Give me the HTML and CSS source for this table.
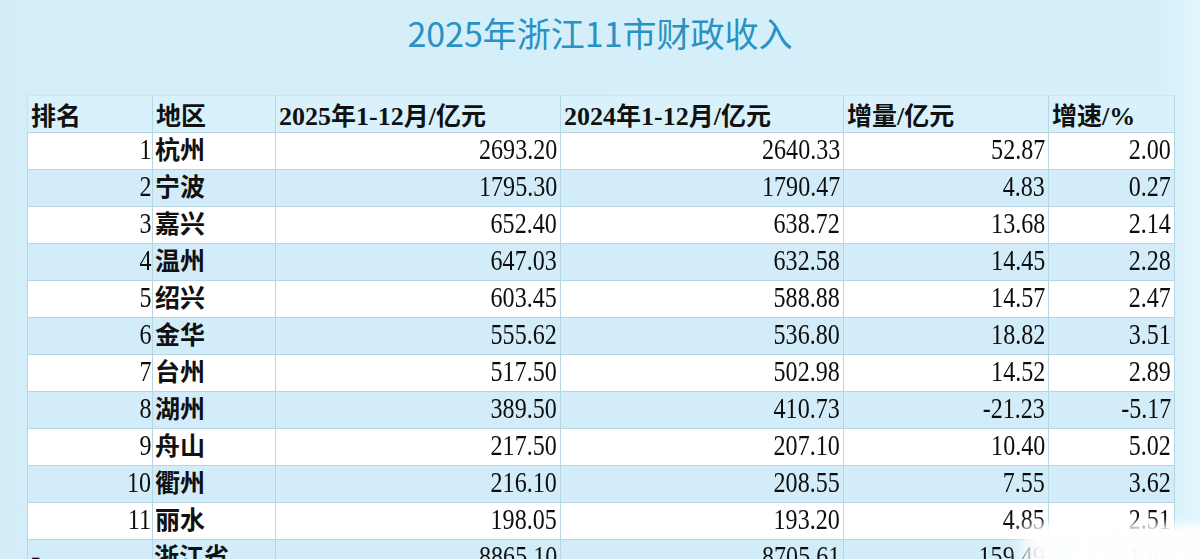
FILE: index.html
```html
<!DOCTYPE html>
<html lang="zh">
<head>
<meta charset="utf-8">
<title>2025年浙江11市财政收入</title>
<link rel="stylesheet" href="styles.css">
</head>
<body>
<div class="page">
  <h1 class="title">2025年浙江11市财政收入</h1>
  <table class="data">
    <colgroup>
      <col class="c-rank"><col class="c-area"><col class="c-y25"><col class="c-y24"><col class="c-inc"><col class="c-rate">
    </colgroup>
    <thead>
      <tr>
        <th><span class="cj">排名</span></th>
        <th><span class="cj">地区</span></th>
        <th><span class="hd">2025</span><span class="cj">年</span><span class="hd">1-12</span><span class="cj">月</span><span class="hd">/</span><span class="cj">亿元</span></th>
        <th><span class="hd">2024</span><span class="cj">年</span><span class="hd">1-12</span><span class="cj">月</span><span class="hd">/</span><span class="cj">亿元</span></th>
        <th><span class="cj">增量</span><span class="hd">/</span><span class="cj">亿元</span></th>
        <th><span class="cj">增速</span><span class="hd">/%</span></th>
      </tr>
    </thead>
    <tbody>
      <tr><td class="r"><span class="n">1</span></td><td><span class="cj">杭州</span></td><td class="r"><span class="n">2693.20</span></td><td class="r"><span class="n">2640.33</span></td><td class="r"><span class="n">52.87</span></td><td class="r"><span class="n">2.00</span></td></tr>
      <tr><td class="r"><span class="n">2</span></td><td><span class="cj">宁波</span></td><td class="r"><span class="n">1795.30</span></td><td class="r"><span class="n">1790.47</span></td><td class="r"><span class="n">4.83</span></td><td class="r"><span class="n">0.27</span></td></tr>
      <tr><td class="r"><span class="n">3</span></td><td><span class="cj">嘉兴</span></td><td class="r"><span class="n">652.40</span></td><td class="r"><span class="n">638.72</span></td><td class="r"><span class="n">13.68</span></td><td class="r"><span class="n">2.14</span></td></tr>
      <tr><td class="r"><span class="n">4</span></td><td><span class="cj">温州</span></td><td class="r"><span class="n">647.03</span></td><td class="r"><span class="n">632.58</span></td><td class="r"><span class="n">14.45</span></td><td class="r"><span class="n">2.28</span></td></tr>
      <tr><td class="r"><span class="n">5</span></td><td><span class="cj">绍兴</span></td><td class="r"><span class="n">603.45</span></td><td class="r"><span class="n">588.88</span></td><td class="r"><span class="n">14.57</span></td><td class="r"><span class="n">2.47</span></td></tr>
      <tr><td class="r"><span class="n">6</span></td><td><span class="cj">金华</span></td><td class="r"><span class="n">555.62</span></td><td class="r"><span class="n">536.80</span></td><td class="r"><span class="n">18.82</span></td><td class="r"><span class="n">3.51</span></td></tr>
      <tr><td class="r"><span class="n">7</span></td><td><span class="cj">台州</span></td><td class="r"><span class="n">517.50</span></td><td class="r"><span class="n">502.98</span></td><td class="r"><span class="n">14.52</span></td><td class="r"><span class="n">2.89</span></td></tr>
      <tr><td class="r"><span class="n">8</span></td><td><span class="cj">湖州</span></td><td class="r"><span class="n">389.50</span></td><td class="r"><span class="n">410.73</span></td><td class="r"><span class="n">-21.23</span></td><td class="r"><span class="n">-5.17</span></td></tr>
      <tr><td class="r"><span class="n">9</span></td><td><span class="cj">舟山</span></td><td class="r"><span class="n">217.50</span></td><td class="r"><span class="n">207.10</span></td><td class="r"><span class="n">10.40</span></td><td class="r"><span class="n">5.02</span></td></tr>
      <tr><td class="r"><span class="n">10</span></td><td><span class="cj">衢州</span></td><td class="r"><span class="n">216.10</span></td><td class="r"><span class="n">208.55</span></td><td class="r"><span class="n">7.55</span></td><td class="r"><span class="n">3.62</span></td></tr>
      <tr><td class="r"><span class="n">11</span></td><td><span class="cj">丽水</span></td><td class="r"><span class="n">198.05</span></td><td class="r"><span class="n">193.20</span></td><td class="r"><span class="n">4.85</span></td><td class="r"><span class="n">2.51</span></td></tr>
      <tr class="total"><td><span class="dash">-</span></td><td><span class="cj">浙江省</span></td><td class="r"><span class="n">8865.10</span></td><td class="r"><span class="n">8705.61</span></td><td class="r"><span class="n">159.49</span></td><td class="r"><span class="n">1.83</span></td></tr>
    </tbody>
  </table>
  <div class="watermark" aria-hidden="true"></div>
</div>
</body>
</html>
```

FILE: styles.css
```css
html, body {
  margin: 0;
  padding: 0;
}
body {
  background: #d4effa;
  width: 1200px;
  height: 559px;
  overflow: hidden;
}
.page {
  position: relative;
  width: 1200px;
  height: 559px;
  overflow: hidden;
  background: linear-gradient(to right, #d3eef9 0%, #d6f0fb 97%, #e4f6fd 100%);
}
.title {
  margin: 0;
  padding-top: 11px;
  height: 82px;
  box-sizing: border-box;
  text-align: center;
  font-family: "Noto Sans CJK SC", "Noto Sans", sans-serif;
  font-weight: 400;
  font-size: 34px;
  line-height: 44px;
  color: #2a91c4;
}
.data {
  margin: 13px 0 0 27px;
  border-collapse: collapse;
  table-layout: fixed;
  width: 1147px;
  font-family: "Liberation Serif", "Noto Sans CJK SC", serif;
  color: #111;
}
.c-rank { width: 125px; }
.c-area { width: 123px; }
.c-y25 { width: 285px; }
.c-y24 { width: 283px; }
.c-inc { width: 205px; }
.c-rate { width: 126px; }

.data th, .data td {
  border: 1px solid #b7d6e3;
  padding: 0 3px;
  white-space: nowrap;
  overflow: visible;
}
.data thead tr {
  height: 35px;
  background: #d8f1fb;
}
.data th {
  text-align: left;
  vertical-align: middle;
  font-weight: 400;
  border-top-color: #cde6f0;
  border-left-color: #c6e2ee;
}
.data tbody tr {
  height: 37px;
}
.data tbody tr:nth-child(odd) {
  background: #ffffff;
}
.data tbody tr:nth-child(even) {
  background: #d2edf9;
}
.data td {
  vertical-align: middle;
  line-height: 30px;
}
.data td.r {
  text-align: right;
}
.cj {
  font-family: "Noto Sans CJK SC", sans-serif;
  font-weight: 700;
  font-size: 25px;
  color: #111;
}
.hd {
  font-family: "Liberation Serif", serif;
  font-size: 26px;
  font-weight: 700;
}
.n {
  display: inline-block;
  font-family: "Liberation Serif", serif;
  font-size: 29px;
  transform: scaleX(0.83);
  transform-origin: right center;
  color: #0d0d0d;
}
.data td:nth-child(2) {
  padding-left: 2px;
}
.data td:first-child {
  padding-right: 1px;
}
.total td:nth-child(2) {
  padding-left: 1px;
}
.dash {
  font-family: "Liberation Serif", serif;
  font-weight: 700;
  font-size: 28px;
}
.watermark {
  position: absolute;
  left: 1010px;
  top: 524px;
  width: 210px;
  height: 60px;
  background: linear-gradient(to right, rgba(255,255,255,0) 0%, rgba(255,255,255,0.95) 12%, #fdfeff 100%);
  filter: blur(5px);
}
```
